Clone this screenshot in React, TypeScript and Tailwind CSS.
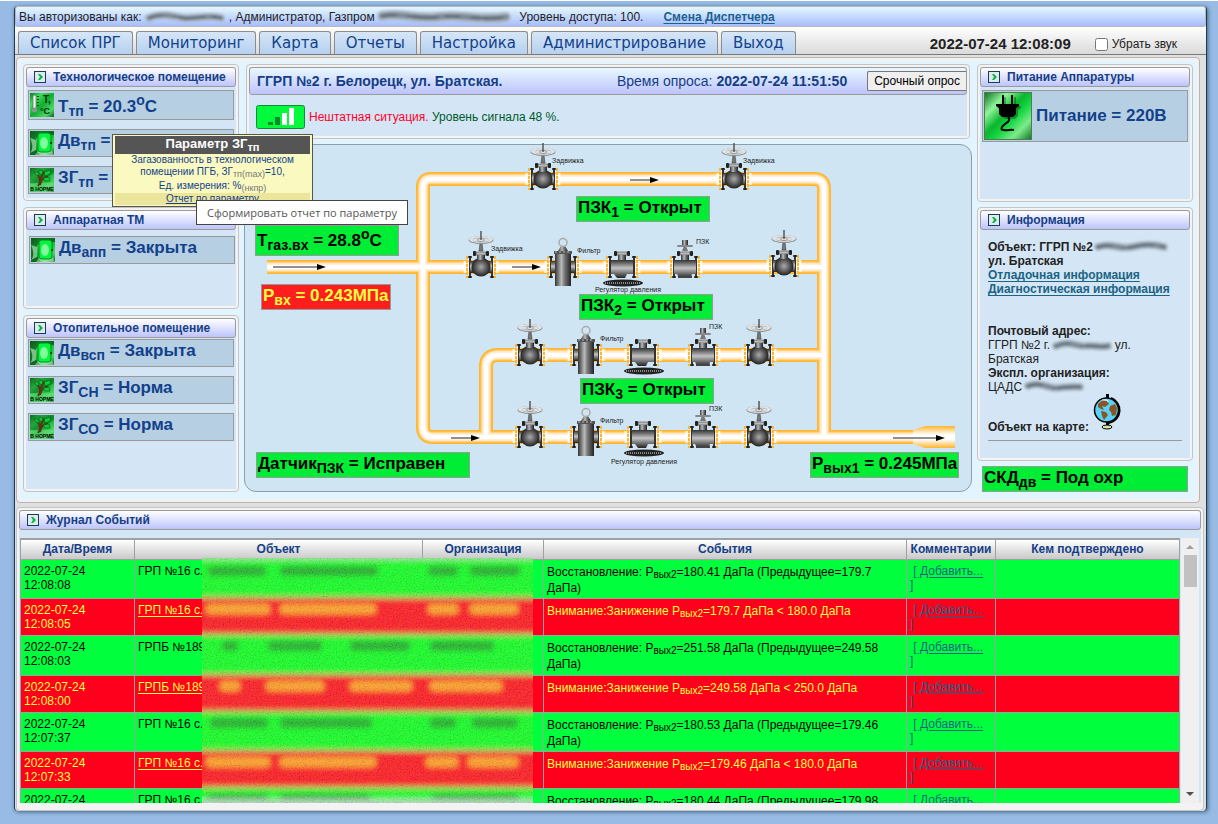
import type { ReactNode } from "react";

const tabs = ["Список ПРГ", "Мониторинг", "Карта", "Отчеты", "Настройка", "Администрирование", "Выход"];

function Smudge({ width, height, d, thick = 8 }: { width: number; height: number; d: string; thick?: number }) {
  return (
    <svg width={width} height={height} viewBox={`0 0 ${width} ${height}`} className="inline-block shrink-0 overflow-visible align-middle blur-[1px]" aria-hidden="true">
      <path d={d} fill="none" stroke="#a9b6c2" strokeWidth={thick} strokeLinecap="round" />
      <path d={d} fill="none" stroke="#7e8b97" strokeWidth={thick / 2} strokeLinecap="round" strokeDasharray="26 5 38 3" />
      <path d={d} fill="none" stroke="#5f6c78" strokeWidth={thick / 5} strokeLinecap="round" strokeDasharray="14 12 30 8" />
    </svg>
  );
}

function Panel({ title, className, children }: { title: string; className: string; children: ReactNode }) {
  return (
    <section className={`rounded-[4px] border border-[#c4c4c4] bg-[#f3f3f3] p-[2px] ${className}`}>
      <div className="flex h-full flex-col bg-[#d4e6f5]">
        <h2 className="flex h-[20px] shrink-0 items-center gap-[7px] rounded-[3px] border border-[#9b9b9b] bg-linear-to-b from-white to-[#bdc4fc] pl-[7px] text-[12px] font-bold text-[#153e86]">
          <svg width="12" height="12" viewBox="0 0 12 12" className="shrink-0" aria-hidden="true">
            <rect x="0.5" y="0.5" width="11" height="11" fill="#dcebf0" stroke="#1d3a4f" />
            <path d="M4 3h2l3 3-3 3H4l2-3z" fill="#08b43c" />
          </svg>
          <span>{title}</span>
        </h2>
        {children}
      </div>
    </section>
  );
}

function GreenTile({ id, children }: { id: string; children: ReactNode }) {
  return (
    <svg width="24" height="24" viewBox="0 0 24 24" className="shrink-0" aria-hidden="true">
      <defs>
        <linearGradient id={id} x1="0" y1="0" x2="1" y2="1">
          <stop offset="0" stopColor="#0d7a22" />
          <stop offset="0.25" stopColor="#3fdc5c" />
          <stop offset="0.5" stopColor="#0fae30" />
          <stop offset="0.8" stopColor="#4fd868" />
          <stop offset="1" stopColor="#076018" />
        </linearGradient>
      </defs>
      <rect width="24" height="24" fill={`url(#${id})`} />
      {children}
    </svg>
  );
}

function DoorIcon({ id }: { id: string }) {
  return (
    <GreenTile id={id}>
      <path d="M0 0h24v4H9L6 8v10l4 6H0z" fill="#064d14" opacity="0.7" />
      <path d="M0 22c3-3 3-9 0-15l6 2v10z" fill="#b9e8c0" opacity="0.65" />
      <path d="M8 20h14l2 4H5z" fill="#e3f7e5" opacity="0.45" />
      <path d="M8 4q0-2 3-2h7q3 0 3 3v13q0 3-3 3h-7q-3 0-3-3z" fill="#00f53c" stroke="#0a8826" />
      <ellipse cx="14" cy="12" rx="4" ry="6" fill="#9dffb0" opacity="0.8" />
      <path d="M20 11h2v2h-2z" fill="#05440f" />
    </GreenTile>
  );
}

function TreeIcon({ id }: { id: string }) {
  return (
    <GreenTile id={id}>
      <path d="M0 0h24v5L5 16H0z" fill="#075d18" opacity="0.45" />
      <rect y="15" width="24" height="9" fill="#6fe081" opacity="0.55" />
      <path d="M8 18c3-4 2-8 0-11M10 17c1-6 4-8 8-8M11 12c0-4 2-7 4-8" fill="none" stroke="#5c3413" strokeWidth="2" />
      <path d="M4 4l4 0 1 4-3-1zM9 2l4 1-1 4-3-2zM14 4l7-2-1 4-5 2zM13 10l6-1 1 4-5 0z" fill="#0bd03a" stroke="#064d14" strokeWidth="0.6" />
      <text x="12" y="23" textAnchor="middle" className="fill-black font-['Liberation_Sans'] text-[5px] font-bold">В НОРМЕ</text>
    </GreenTile>
  );
}

function ThermometerIcon() {
  return (
    <GreenTile id="tile-temp">
      <rect x="3" y="2" width="3" height="15" rx="1.5" fill="#f2f2f2" stroke="#4a6a50" strokeWidth="0.6" />
      <circle cx="4.500" cy="17" r="2.500" fill="#8b9690" />
      <path d="M8 3v12" stroke="#053c10" strokeDasharray="1 2" strokeWidth="2" />
      <text x="13" y="10" className="fill-[#04300b] font-['Liberation_Sans'] text-[10px] font-bold">T,</text>
      <text x="10" y="21" className="fill-[#04300b] font-['Liberation_Sans'] text-[9px]">°C</text>
    </GreenTile>
  );
}

function PlugIcon() {
  return (
    <svg width="48" height="48" viewBox="0 0 48 48" className="shrink-0" aria-hidden="true">
      <defs>
        <linearGradient id="plug-bg" x1="0" y1="0" x2="1" y2="1">
          <stop offset="0" stopColor="#0f6f20" />
          <stop offset="0.25" stopColor="#8ff59b" />
          <stop offset="0.45" stopColor="#0ab62e" />
          <stop offset="0.6" stopColor="#17d843" />
          <stop offset="0.78" stopColor="#7deb8c" />
          <stop offset="1" stopColor="#0d7420" />
        </linearGradient>
      </defs>
      <rect x="0.5" y="0.5" width="47" height="47" fill="url(#plug-bg)" stroke="#4e7a55" />
      <path d="M20 5h2v9h8V5h2v9h5v2l-3 2v6l-3 3H21l-3-3v-6l-4-2v-2h6z" fill="#000" opacity="0.3" />
      <path d="M18 3h2v9h7V3h2v9h6v2l-3 2v6l-3 3H18l-3-3v-6l-3-2v-2h6z" fill="#000" />
      <path d="M24 25c3 3 0 5-3 7-5 4-4 6-1 6 4 1 6-1 10 0" fill="none" stroke="#000" strokeWidth="2" />
    </svg>
  );
}

function GlobeIcon() {
  return (
    <svg width="28" height="36" viewBox="0 0 28 36" aria-hidden="true">
      <path d="M13 0h3v4h-3z" fill="#000" />
      <path d="M18 4a13 13 0 0 1 -2 25" fill="none" stroke="#000" strokeWidth="2" />
      <circle cx="13.500" cy="16" r="12" fill="#58d3f5" stroke="#000" strokeWidth="1.5" />
      <path d="M5 10l5-4 4 1 2 3-4 3-3-1 2 4-3-1-3-2zM8 17l5 1 2 3-4 5-2-4zM17 12l5-2 2 4-1 7-4 1-1-4-2-2z" fill="#8a5526" />
      <path d="M9 6h5l1 2" fill="none" stroke="#fff" />
      <path d="M13 28h3v3h-3z" fill="#000" />
      <ellipse cx="14" cy="33" rx="5" ry="2" fill="#d5e6a2" stroke="#000" />
    </svg>
  );
}

function Param({ icon, tall, children }: { icon: ReactNode; tall?: boolean; children: ReactNode }) {
  return (
    <div className={`relative flex w-[206px] items-center gap-[4px] border border-[#999] bg-[#b7cfe2] pl-px text-[17px] leading-[20px] font-bold text-[#12418c] ${tall ? "h-[30px]" : "h-[28px]"}`}>
      {icon}
      <span className={`whitespace-nowrap [&_sub]:text-[14px] [&_sup]:text-[14px] ${tall ? "pt-1" : "pb-1"}`}>{children}</span>
    </div>
  );
}

function Flange({ x }: { x: number }) {
  const side = x < 0 ? -1 : 1;
  return (
    <g>
      <path d={`M${x + side * 5} -6v12`} stroke="#fff" strokeWidth="3" opacity="0.8" />
      <path d={`M${x + side * 3} -11v22`} stroke="#ffb52e" strokeWidth="2" strokeDasharray="3 1" />
      <path d={`M${x + side} -9v18`} stroke="#fff" strokeWidth="1" />
      <rect x={x - 1} y="-10" width="2" height="20" fill="#333" />
      <rect x={x - 2} y="-11" width="4" height="2" rx="1" fill="#222" />
      <rect x={x - 2} y="9" width="4" height="2" rx="1" fill="#222" />
    </g>
  );
}

function Bonnet() {
  return (
    <g>
      <rect x="-8" y="-16" width="3" height="5" rx="1" fill="#222" />
      <rect x="5" y="-16" width="3" height="5" rx="1" fill="#222" />
      <rect x="-5" y="-15" width="10" height="3" fill="#bbb" stroke="#333" strokeWidth="0.5" />
      <rect x="-4" y="-12" width="8" height="5" fill="url(#cyl)" />
    </g>
  );
}

function Valve({ x, y }: { x: number; y: number }) {
  return (
    <g transform={`translate(${x} ${y})`}>
      <Flange x={-11} />
      <Flange x={11} />
      <rect x="-11" y="-6" width="22" height="12" fill="url(#metal)" />
      <circle r="9.5" fill="url(#ball)" />
      <Bonnet />
      <path d="M-2 -16l1-8h2l1 8z" fill="#777" stroke="#333" strokeWidth="0.5" />
      <ellipse cy="-27" rx="12.500" ry="4" fill="#8d8d8d" />
      <ellipse cy="-27.500" rx="12" ry="3.500" fill="#e4e4e4" />
      <ellipse cy="-27" rx="8.500" ry="2" fill="#d0e4f1" stroke="#999" strokeWidth="0.5" />
      <path d="M-9 -27H9" stroke="#e4e4e4" />
      <ellipse cy="-27" rx="3.500" ry="1.500" fill="#e8e8e8" stroke="#777" strokeWidth="0.7" />
      <path d="M0 -36v9" stroke="#555" strokeWidth="1.500" />
    </g>
  );
}

function Filter({ x, y }: { x: number; y: number }) {
  return (
    <g transform={`translate(${x} ${y})`}>
      <Flange x={-12} />
      <Flange x={12} />
      <rect x="-12" y="-6" width="24" height="12" fill="url(#metal)" />
      <rect x="-8" y="-13" width="16" height="32" fill="url(#cyl)" />
      <path d="M-9 -16h18v3H-9z" fill="#555" />
      <path d="M-8 -15h16" stroke="#bbb" strokeDasharray="2 2" />
      <path d="M-5 -16l3-5h4l3 5z" fill="url(#cyl)" />
      <circle cy="-24.500" r="4" fill="none" stroke="#a9a9a9" strokeWidth="1.500" />
    </g>
  );
}

function Regulator({ x, y }: { x: number; y: number }) {
  return (
    <g transform={`translate(${x} ${y})`}>
      <Flange x={-12} />
      <Flange x={12} />
      <path d="M-11 -7H11V7H5l-2 4H-5l-3-4h-3z" fill="url(#metal)" />
      <Bonnet />
      <ellipse cx="1" cy="16" rx="20" ry="3.500" fill="#222" />
      <path d="M-17 16h36" stroke="#888" strokeWidth="2" strokeDasharray="1 1" />
    </g>
  );
}

function Shutoff({ x, y }: { x: number; y: number }) {
  return (
    <g transform={`translate(${x} ${y})`}>
      <Flange x={-11} />
      <Flange x={11} />
      <path d="M-11 -7H11V7H7l-1 4H-6l-2-4h-3z" fill="url(#metal)" />
      <Bonnet />
      <path d="M-3 -16l2-5h2l2 5z" fill="#777" />
      <rect x="-8" y="-22" width="16" height="2" rx="1" fill="#888" />
      <rect x="-3" y="-27" width="6" height="5" fill="url(#cyl)" />
      <rect x="-7" y="9" width="14" height="2" fill="#444" />
    </g>
  );
}

function FlowArrow({ x, y, length }: { x: number; y: number; length: number }) {
  return (
    <g transform={`translate(${x} ${y})`}>
      <path d={`M0 0H${length - 8}`} stroke="#222" />
      <path d={`M${length - 9} -3L${length} 0L${length - 9} 3z`} fill="#000" />
    </g>
  );
}

const pipes =
  "M267 267H817M423 260V187Q423 179 431 179H814Q824 179 824 189V437M423 260V427Q423 437 433 437H955M486 437V367Q486 355 498 355H824M817 267H824";

const layers = [
  { color: "#ffb52e", width: 14 },
  { color: "#ffc760", width: 11 },
  { color: "#ffe0a6", width: 9 },
  { color: "#fff1d9", width: 7 },
  { color: "#ffffff", width: 4 },
];

const captions = [
  { x: 552, y: 163, text: "Задвижка" },
  { x: 743, y: 163, text: "Задвижка" },
  { x: 491, y: 251, text: "Задвижка" },
  { x: 577, y: 253, text: "Фильтр" },
  { x: 600, y: 341, text: "Фильтр" },
  { x: 600, y: 423, text: "Фильтр" },
  { x: 696, y: 244, text: "ПЗК" },
  { x: 709, y: 329, text: "ПЗК" },
  { x: 709, y: 411, text: "ПЗК" },
  { x: 595, y: 292, text: "Регулятор давления" },
  { x: 611, y: 383, text: "Регулятор давления" },
  { x: 611, y: 464, text: "Регулятор давления" },
];

function Scheme() {
  return (
    <svg width="726" height="346" viewBox="245 145 726 346" className="block overflow-visible" aria-label="Схема газопровода">
      <defs>
        <linearGradient id="metal" x1="0" y1="0" x2="0" y2="1">
          <stop offset="0" stopColor="#333" />
          <stop offset="0.45" stopColor="#c4c4c4" />
          <stop offset="1" stopColor="#222" />
        </linearGradient>
        <linearGradient id="cyl">
          <stop offset="0" stopColor="#333" />
          <stop offset="0.4" stopColor="#bbb" />
          <stop offset="0.6" stopColor="#777" />
          <stop offset="1" stopColor="#222" />
        </linearGradient>
        <radialGradient id="ball">
          <stop offset="0" stopColor="#aaa" />
          <stop offset="0.5" stopColor="#666" />
          <stop offset="1" stopColor="#222" />
        </radialGradient>
        <linearGradient id="outlet" x1="0" y1="0" x2="0" y2="1">
          <stop offset="0" stopColor="#ffb52e" />
          <stop offset="0.4" stopColor="#fff" />
          <stop offset="0.6" stopColor="#fff" />
          <stop offset="1" stopColor="#ffb52e" />
        </linearGradient>
      </defs>
      {layers.map((layer) => (
        <path key={layer.width} d={pipes} fill="none" stroke={layer.color} strokeWidth={layer.width} />
      ))}
      <path d="M913 430l12-4h30v22h-30l-12-4z" fill="url(#outlet)" />
      <FlowArrow x={630} y={180} length={29} />
      <FlowArrow x={512} y={267} length={29} />
      <FlowArrow x={273} y={267} length={53} />
      <FlowArrow x={451} y={438} length={29} />
      <FlowArrow x={893} y={438} length={52} />
      <Valve x={543} y={179} />
      <Valve x={734} y={179} />
      <Valve x={481} y={267} />
      <Valve x={784} y={266} />
      <Filter x={563} y={267} />
      <Regulator x={622} y={267} />
      <Shutoff x={685} y={267} />
      {[355, 437].map((y) => (
        <g key={y}>
          <Valve x={530} y={y} />
          <Filter x={586} y={y} />
          <Regulator x={643} y={y} />
          <Shutoff x={703} y={y} />
          <Valve x={759} y={y} />
        </g>
      ))}
      {captions.map((c) => (
        <text key={`${c.x}-${c.y}`} x={c.x} y={c.y} className="fill-[#222] font-['Liberation_Sans'] text-[7px]">
          {c.text}
        </text>
      ))}
    </svg>
  );
}

function Reading({ place, alarm, children }: { place: string; alarm?: boolean; children: ReactNode }) {
  return (
    <div className={`border border-[#999] px-px text-[17px] leading-[22px] font-bold whitespace-nowrap [&_sub]:text-[14px] [&_sup]:text-[14px] ${alarm ? "bg-[#ff1d1d] text-[#ffff43]" : "bg-[#00ed36] text-black"} ${place}`}>
      {children}
    </div>
  );
}

const events = [
  { time: "12:08:08", object: "ГРП №16 с.", alarm: false, value: "180.41", rest: "(Предыдущее=179.7 ДаПа)", height: "h-[39px]" },
  { time: "12:08:05", object: "ГРП №16 с.", alarm: true, value: "179.7", rest: "< 180.0 ДаПа", height: "h-[37px]" },
  { time: "12:08:03", object: "ГРПБ №189", alarm: false, value: "251.58", rest: "(Предыдущее=249.58 ДаПа)", height: "h-[40px]" },
  { time: "12:08:00", object: "ГРПБ №189", alarm: true, value: "249.58", rest: "< 250.0 ДаПа", height: "h-[37px]" },
  { time: "12:07:37", object: "ГРП №16 с.", alarm: false, value: "180.53", rest: "(Предыдущее=179.46 ДаПа)", height: "h-[39px]" },
  { time: "12:07:33", object: "ГРП №16 с.", alarm: true, value: "179.46", rest: "< 180.0 ДаПа", height: "h-[37px]" },
  { time: "12:07:31", object: "ГРП №16 с.", alarm: false, value: "180.44", rest: "(Предыдущее=179.98 ДаПа)", height: "h-[39px]" },
];

const stripes = [
  { y: -10, h: 50, alarm: false, blobs: [[6, 58], [78, 98], [226, 30], [268, 50]] },
  { y: 40, h: 37, alarm: true, blobs: [[4, 64], [78, 96], [226, 30], [268, 48]] },
  { y: 77, h: 40, alarm: false, blobs: [[20, 16], [66, 54], [148, 60], [228, 64]] },
  { y: 117, h: 37, alarm: true, blobs: [[18, 20], [64, 58], [148, 62], [228, 72]] },
  { y: 154, h: 39, alarm: false, blobs: [[8, 58], [78, 92], [228, 26], [270, 46]] },
  { y: 193, h: 37, alarm: true, blobs: [[4, 64], [78, 96], [224, 32], [266, 50]] },
  { y: 230, h: 24, alarm: false, blobs: [[6, 60], [78, 90], [230, 86]] },
];

function Redaction() {
  return (
    <svg width="331" height="247" viewBox="0 0 331 247" className="absolute top-5 left-[182px] overflow-hidden" aria-hidden="true">
      <defs>
        <filter id="soft" x="-10%" y="-10%" width="120%" height="120%">
          <feGaussianBlur stdDeviation="2.5" />
        </filter>
        <filter id="grain" x="0" y="0" width="100%" height="100%">
          <feTurbulence type="fractalNoise" baseFrequency="0.7" numOctaves="2" />
          <feColorMatrix type="matrix" values="3 0 0 0 -1  0 3 0 0 -1  0 0 3 0 -1  0 0 0 0 1" />
        </filter>
      </defs>
      <g filter="url(#soft)">
        {stripes.map((s) => (
          <g key={s.y}>
            <rect x="-20" y={s.y} width="371" height={s.h + 1} fill={s.alarm ? "#ff1c22" : "#14ff28"} />
            <rect x="-20" y={s.y - 2} width="371" height="3" fill="#a9b860" />
          </g>
        ))}
        {stripes.map((s) => (
          <g key={s.y}>
            {s.blobs.map(([x, w]) => (
              <rect key={x} x={x} y={s.y < 0 ? 8 : s.y + 6} width={w} height="10" rx="4" fill={s.alarm ? "#ffa42c" : "#22b42c"} />
            ))}
          </g>
        ))}
        <rect x="-20" y="-6" width="371" height="8" fill="#9fdc9f" />
        <rect x="-20" y="241" width="371" height="10" fill="#b0dcb8" />
      </g>
      <rect width="331" height="247" filter="url(#grain)" opacity="0.12" />
    </svg>
  );
}

function EventTable() {
  const cell = "border border-[#a0a0a0] px-[3px] pt-1 pb-0";
  const head = "border border-[#a0a0a0] bg-linear-to-b from-white to-[#c9c9c9] p-0 font-bold text-[#153e86]";
  return (
    <div className="relative h-[265px] min-w-0 flex-1 overflow-hidden">
      <table className="w-full table-fixed border-collapse border-t-2 border-[#a0a0a0] text-[12px] leading-[14px]">
        <colgroup>
          <col className="w-[114px]" />
          <col className="w-[288px]" />
          <col className="w-[121px]" />
          <col />
          <col className="w-[89px]" />
          <col className="w-[184px]" />
        </colgroup>
        <thead>
          <tr className="h-[20px]">
            <th className={head}>Дата/Время</th>
            <th className={head}>Объект</th>
            <th className={head}>Организация</th>
            <th className={head}>События</th>
            <th className={head}>Комментарии</th>
            <th className={head}>Кем подтверждено</th>
          </tr>
        </thead>
        <tbody>
          {events.map((e) => (
            <tr key={e.time} className={`align-top ${e.height} ${e.alarm ? "bg-[#ff001c] text-[#ffff43]" : "bg-[#00ff3c] text-black"}`}>
              <td className={cell}>2022-07-24<br />{e.time}</td>
              <td className={cell}>
                {e.alarm ? <a href="#object" className="underline underline-offset-2">{e.object}</a> : e.object}
              </td>
              <td className={cell} />
              <td className={`${cell} leading-[16px]`}>
                {e.alarm ? "Внимание:Занижение" : "Восстановление:"} P<sub className="text-[10px]">вых2</sub>={e.value} ДаПа {e.rest}
              </td>
              <td className={`${cell} text-[#1a6484]`}>
                &nbsp;<a href="#comment" className="underline underline-offset-2">[ Добавить...</a><br />]
              </td>
              <td className={cell} />
            </tr>
          ))}
        </tbody>
      </table>
      <Redaction />
    </div>
  );
}

export default function App() {
  return (
    <div className="min-h-screen border-t border-white bg-[#98bbe5] pt-1 pr-[11px] pb-3 pl-[14px] font-['Liberation_Sans',Arial,sans-serif] text-[12px] leading-[14px] text-[#222]">
      <div className="rounded-[4px] border-x border-[#1d3a4f] bg-[#e0e0e0] shadow-[1px_1px_4px_#3d6384]">
        <header>
          <div className="mt-px flex h-[21px] items-center rounded-[3px] border border-[#b9b9b9] bg-linear-to-b from-[#e4f8ff] to-[#a8bcfb] pl-[3px] whitespace-nowrap">
            <span>Вы авторизованы как:&nbsp;</span>
            <Smudge width={84} height={12} d="M4 7c12-5 24-2 34 0s24-4 38 0" />
            <span>, Администратор, Газпром&nbsp;</span>
            <Smudge width={138} height={14} thick={10} d="M4 6c20-4 34 4 56 1s44 4 68 0" />
            <span>&nbsp;Уровень доступа: 100.</span>
            <a href="#shift" className="ml-5 font-bold text-[#1a6191] underline underline-offset-2">Смена Диспетчера</a>
          </div>
          <div className="flex h-[28px] items-end border-b border-[#7b7b7b] bg-linear-to-b from-white to-[#dadada] pl-[3px]">
            <nav className="flex gap-[3px] font-['DejaVu_Sans',Verdana,sans-serif] text-[15px]">
              {tabs.map((t) => (
                <a key={t} href="#tab" className="flex h-[23px] items-center rounded-t-[3px] border border-b-0 border-[#8c8c8c] bg-linear-to-b from-[#d6e6f6] to-[#b5d0f1] px-[11px] text-[#12418c]">
                  {t}
                </a>
              ))}
            </nav>
            <div className="ml-auto flex items-center gap-6 pr-[29px] pb-px">
              <span className="text-[15px] leading-[18px] font-bold">2022-07-24 12:08:09</span>
              <label className="flex items-center gap-1">
                <input type="checkbox" className="size-[13px]" />
                Убрать звук
              </label>
            </div>
          </div>
        </header>

        <main className="mt-[2px] mr-[6px] ml-px grid grid-cols-[216px_1fr_216px] gap-[5px] rounded-[4px] border border-[#b4b4b4] bg-[#e1f4ff] px-[6px] pt-[6px] pb-[10px] ring-3 ring-[#f1f1f1] ring-inset">
          <div className="flex flex-col gap-[6px]">
            <Panel title="Технологическое помещение" className="h-[137px]">
              <div className="mt-[3px] ml-[2px] flex flex-col gap-[9px]">
                <Param tall icon={<ThermometerIcon />}>Т<sub>тп</sub> = 20.3<sup>o</sup>C</Param>
                <Param icon={<DoorIcon id="door-1" />}>Дв<sub>тп</sub> = Закрыта</Param>
                <div className="relative">
                  <Param icon={<TreeIcon id="tree-1" />}>ЗГ<sub>тп</sub> = Норма</Param>
                  <div className="absolute -top-8 left-[84px] z-10 w-[201px] border border-[#555] bg-[#fafac0] px-[2px] py-px text-center text-[10px] leading-[12px] text-[#12418c]" role="tooltip">
                    <div className="h-[18px] bg-[#555] text-[13px] leading-[16px] font-bold text-white">Параметр ЗГ<sub className="text-[11px]">тп</sub></div>
                    <p>Загазованность в технологическом<br />помещении ПГБ, ЗГ<sub className="text-[9px] text-[#777]">тп(max)</sub>=10,</p>
                    <p className="pt-px leading-[13px]">Ед. измерения: %<sub className="text-[9px] text-[#777]">(нкпр)</sub></p>
                    <a href="#report" className="mt-px block bg-[#ece59c] underline">Отчет по параметру</a>
                  </div>
                  <div className="absolute top-[34px] left-[168px] z-20 flex h-[25px] w-[212px] items-center justify-center border border-[#444] bg-white font-['Open_Sans','Noto_Sans',sans-serif] text-[11px] whitespace-nowrap text-[#555]" role="tooltip">
                    Сформировать отчет по параметру
                  </div>
                </div>
              </div>
            </Panel>
            <Panel title="Аппаратная ТМ" className="h-[102px]">
              <div className="mt-[6px] ml-[3px]">
                <Param icon={<DoorIcon id="door-2" />}>Дв<sub>апп</sub> = Закрыта</Param>
              </div>
            </Panel>
            <Panel title="Отопительное помещение" className="h-[177px]">
              <div className="mt-px ml-[2px] flex flex-col gap-[9px]">
                <Param icon={<DoorIcon id="door-3" />}>Дв<sub>всп</sub> = Закрыта</Param>
                <Param icon={<TreeIcon id="tree-2" />}>ЗГ<sub>СН</sub> = Норма</Param>
                <Param icon={<TreeIcon id="tree-3" />}>ЗГ<sub>СО</sub> = Норма</Param>
              </div>
            </Panel>
          </div>

          <div className="flex min-w-0 flex-col gap-[5px]">
            <section className="mx-[2px] h-[75px] rounded-[4px] border border-[#c4c4c4] bg-[#f3f3f3] p-[2px]">
              <div className="h-full bg-[#d4e6f5]">
                <div className="flex h-[28px] items-center rounded-[3px] border border-[#9b9b9b] bg-linear-to-b from-[#e9f8ff] to-[#bdc4fc] pl-[7px] text-[14px] text-[#153e86]">
                  <h1 className="font-bold">ГГРП №2 г. Белорецк, ул. Братская.</h1>
                  <span className="mr-5 ml-auto">Время опроса: <b>2022-07-24 11:51:50</b></span>
                  <button type="button" className="h-[20px] rounded-l-[2px] border border-r-0 border-[#767676] bg-[#efefef] px-[6px] text-[12px] text-black">Срочный опрос</button>
                </div>
                <div className="flex h-[44px] items-center gap-1 pl-[7px]">
                  <svg width="49" height="24" viewBox="0 0 49 24" className="shrink-0" aria-hidden="true">
                    <rect x="0.5" y="0.500" width="48" height="23" rx="2" fill="#00fb3c" stroke="#178a35" />
                    <path d="M12 17h5v3h-5zM19 12h5v8h-5z" fill="#0a8a28" />
                    <path d="M26 8h5v12h-5zM33 3h5v17h-5z" fill="#fff" />
                  </svg>
                  <p className="text-[#00592b]"><span className="text-[#ff0027]">Нештатная ситуация.</span> Уровень сигнала 48 %.</p>
                </div>
              </div>
            </section>
            <section className="relative h-[348px] rounded-[12px] border border-[#8f9da8] bg-[#d0e5f3]">
              <Scheme />
              <Reading place="absolute top-[80px] left-[10px] h-[31px] w-[144px] pt-1">Т<sub>газ.вх</sub> = 28.8<sup>o</sup>C</Reading>
              <Reading alarm place="absolute top-[139px] left-[16px] h-[26px]">Р<sub>вх</sub> = 0.243МПа</Reading>
              <Reading place="absolute top-[51px] left-[331px] h-[26px] w-[134px]">ПЗК<sub>1</sub> = Открыт</Reading>
              <Reading place="absolute top-[149px] left-[334px] h-[26px] w-[134px]">ПЗК<sub>2</sub> = Открыт</Reading>
              <Reading place="absolute top-[233px] left-[335px] h-[26px] w-[134px]">ПЗК<sub>3</sub> = Открыт</Reading>
              <Reading place="absolute top-[307px] left-[11px] h-[26px] w-[214px]">Датчик<sub>ПЗК</sub> = Исправен</Reading>
              <Reading place="absolute top-[307px] left-[565px] h-[26px]">Р<sub>вых1</sub> = 0.245МПа</Reading>
            </section>
          </div>

          <div className="flex flex-col gap-[5px]">
            <Panel title="Питание Аппаратуры" className="h-[138px]">
              <div className="mt-[3px] ml-[2px] flex h-[52px] w-[206px] items-center gap-[4px] border border-[#999] bg-[#b7cfe2] pl-px text-[17px] font-bold text-[#12418c]">
                <PlugIcon />
                <span className="pb-px">Питание = 220В</span>
              </div>
            </Panel>
            <Panel title="Информация" className="h-[254px]">
              <div className="px-2 pt-[10px]">
                <p className="flex font-bold whitespace-nowrap">Объект: ГГРП №2&nbsp;<Smudge width={72} height={12} d="M2 7c14-5 20 3 34 0s20-3 32 0" /></p>
                <p className="font-bold">ул. Братская</p>
                <a href="#debug" className="block font-bold text-[#1a6484] underline underline-offset-2">Отладочная информация</a>
                <a href="#diag" className="block font-bold text-[#1a6484] underline underline-offset-2">Диагностическая информация</a>
                <p className="mt-7 font-bold">Почтовый адрес:</p>
                <p className="flex">ГГРП №2 г.&nbsp;<Smudge width={58} height={12} d="M3 8c14-6 20 1 30 0s14 2 22 0" />&nbsp;ул.</p>
                <p>Братская</p>
                <p className="font-bold">Экспл. организация:</p>
                <p className="flex">ЦАДС&nbsp;<Smudge width={60} height={12} d="M3 6c14-5 20 3 30 2s14-2 22-1" /></p>
                <div className="flex items-end gap-1 border-b border-[#999] pb-[6px] font-bold">
                  <span>Объект на карте:</span>
                  <a href="#map" aria-label="Карта" className="pb-1"><GlobeIcon /></a>
                </div>
              </div>
            </Panel>
            <Reading place="mx-[5px] h-[26px]">СКД<sub>дв</sub> = Под охр</Reading>
          </div>
        </main>

        <div className="mt-1 mr-[2px] ml-px">
          <Panel title="Журнал Событий" className="pb-[7px]">
            <div className="mt-2 flex pr-[2px] pl-px">
              <EventTable />
              <div className="ml-px flex w-[18px] flex-col items-center bg-[#f0f0f0]">
                <svg width="8" height="17" viewBox="0 0 8 17" aria-hidden="true"><path d="M0 11l4-4 4 4z" fill="#a0a0a0" /></svg>
                <div className="h-[32px] w-[13px] bg-[#c1c1c1]" />
                <svg width="8" height="17" viewBox="0 0 8 17" className="mt-auto" aria-hidden="true"><path d="M0 6l4 4 4-4z" fill="#505050" /></svg>
              </div>
            </div>
          </Panel>
        </div>
      </div>
    </div>
  );
}
